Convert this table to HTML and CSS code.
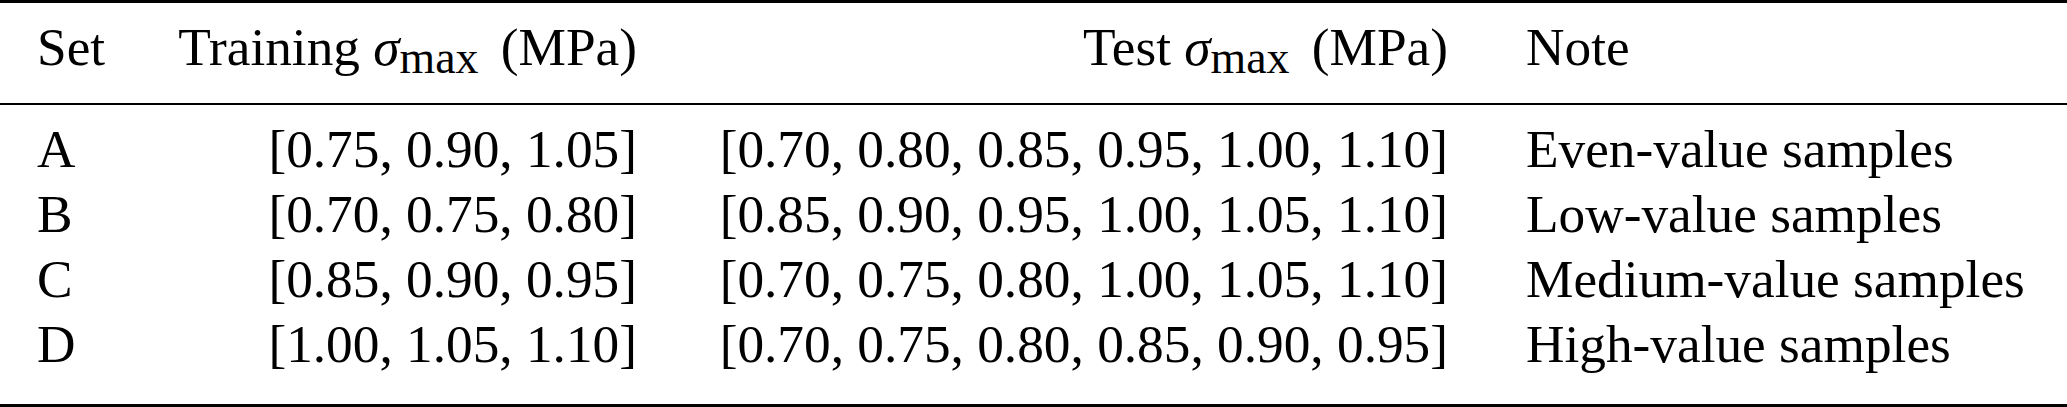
FILE: index.html
```html
<!DOCTYPE html>
<html lang="en">
<head>
    <meta charset="UTF-8">
    <title>Training and test sets</title>
    <link rel="stylesheet" href="styles.css">
</head>
<body>
    <table class="sets">
        <thead>
            <tr>
                <th class="col-set">Set</th>
                <th class="col-train">Training <i class="sym">σ</i><span class="sub">max</span> (MPa)</th>
                <th class="col-test">Test <i class="sym">σ</i><span class="sub">max</span> (MPa)</th>
                <th class="col-note">Note</th>
            </tr>
        </thead>
        <tbody>
            <tr class="first">
                <td class="col-set">A</td>
                <td class="col-train">[0.75, 0.90, 1.05]</td>
                <td class="col-test">[0.70, 0.80, 0.85, 0.95, 1.00, 1.10]</td>
                <td class="col-note">Even-value samples</td>
            </tr>
            <tr>
                <td class="col-set">B</td>
                <td class="col-train">[0.70, 0.75, 0.80]</td>
                <td class="col-test">[0.85, 0.90, 0.95, 1.00, 1.05, 1.10]</td>
                <td class="col-note">Low-value samples</td>
            </tr>
            <tr>
                <td class="col-set">C</td>
                <td class="col-train">[0.85, 0.90, 0.95]</td>
                <td class="col-test">[0.70, 0.75, 0.80, 1.00, 1.05, 1.10]</td>
                <td class="col-note">Medium-value samples</td>
            </tr>
            <tr class="last">
                <td class="col-set">D</td>
                <td class="col-train">[1.00, 1.05, 1.10]</td>
                <td class="col-test">[0.70, 0.75, 0.80, 0.85, 0.90, 0.95]</td>
                <td class="col-note">High-value samples</td>
            </tr>
        </tbody>
    </table>
</body>
</html>
```

FILE: styles.css
```css
* {
    margin: 0;
    padding: 0;
    box-sizing: border-box;
}

body {
    background: #fff;
    color: #000;
    font-family: "Liberation Serif", "Times New Roman", serif;
}

.sets {
    width: 2067px;
    table-layout: fixed;
    border-collapse: separate;
    border-spacing: 0;
    font-size: 53.3px;
    line-height: 65px;
}

.sets th,
.sets td {
    font-weight: normal;
    padding: 0 39px;
    white-space: nowrap;
    vertical-align: baseline;
}

/* booktabs style rules */
.sets th {
    border-top: 3px solid #000;
    border-bottom: 2px solid #000;
    padding-top: 12px;
    padding-bottom: 23px;
}

.sets tr.first td {
    padding-top: 12px;
}

.sets tr.last td {
    padding-bottom: 27px;
    border-bottom: 3px solid #000;
}

.col-set {
    width: 144px;
    text-align: left;
}

.sets .col-set {
    padding-left: 37px;
}

.col-train {
    width: 532px;
    text-align: right;
}

.sets .col-train {
    padding-left: 20px;
}

.col-test {
    width: 811px;
    text-align: right;
}

.col-note {
    text-align: left;
}

.sym {
    font-style: italic;
}

.sub {
    position: relative;
    top: 8px;
    font-size: 0.86em;
    line-height: 0;
    margin-right: 9px;
}
```
